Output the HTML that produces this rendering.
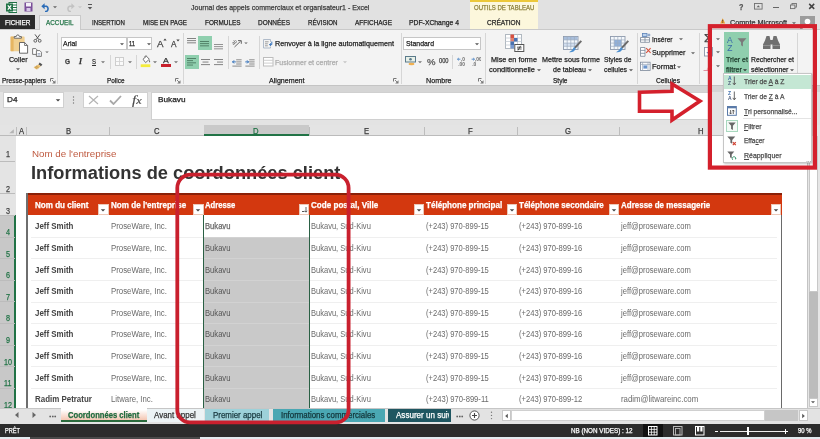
<!DOCTYPE html>
<html lang="fr"><head><meta charset="utf-8"><title>Journal des appels commerciaux et organisateur1 - Excel</title>
<style>
html,body{margin:0;padding:0}
body{width:820px;height:439px;position:relative;overflow:hidden;background:#e1e1e1;font-family:"Liberation Sans",sans-serif}
#app{position:absolute;left:0;top:0;width:820px;height:439px;overflow:hidden;will-change:transform;filter:blur(0.35px)}
.b{position:absolute;box-sizing:border-box;display:block}
.t{position:absolute;white-space:pre;transform-origin:0 50%;display:block;line-height:14px;-webkit-text-stroke:0.25px currentColor}
</style></head><body><div id="app">
<svg class="b" style="left:5.5px;top:1.5px;" width="11" height="11" viewBox="0 0 11 11"><rect x="3" y="0.5" width="8" height="10" fill="#fff" stroke="#217346" stroke-width="1"/><path d="M7 3H11M7 5.5H11M7 8H11" stroke="#217346" stroke-width="1"/><rect x="0" y="1.5" width="7" height="8" fill="#217346"/><path d="M1.8 3.3L5.2 7.7M5.2 3.3L1.8 7.7" stroke="#fff" stroke-width="1.2"/></svg>
<svg class="b" style="left:24px;top:1.5px;" width="9" height="10" viewBox="0 0 9 10"><rect x="0.5" y="0.5" width="8" height="9" fill="#7a4f9a"/><rect x="2" y="1" width="5" height="3.5" fill="#f4f0f8"/><rect x="2.5" y="6" width="4" height="3" fill="#d8c8e8"/></svg>
<svg class="b" style="left:41px;top:1.5px;" width="10" height="10" viewBox="0 0 10 10"><path d="M2 4.2H5.5A3 3 0 0 1 5.5 9.5H4" fill="none" stroke="#2b6cb8" stroke-width="1.6"/><path d="M0.3 4.2L3.6 1.2V7.2Z" fill="#2b6cb8"/></svg>
<svg class="b" style="left:52px;top:5px;" width="6" height="4" viewBox="0 0 6 4"><path d="M1.00 1.36H5.00L3 3.28Z" fill="#666"/></svg>
<svg class="b" style="left:64.5px;top:1.5px;" width="10" height="10" viewBox="0 0 10 10"><path d="M8 4.2H4.5A3 3 0 0 0 4.5 9.5H6" fill="none" stroke="#c2c2c2" stroke-width="1.6"/><path d="M9.7 4.2L6.4 1.2V7.2Z" fill="#c2c2c2"/></svg>
<svg class="b" style="left:76.5px;top:5px;" width="6" height="4" viewBox="0 0 6 4"><path d="M1.00 1.36H5.00L3 3.28Z" fill="#c8c8c8"/></svg>
<svg class="b" style="left:87px;top:3px;" width="6" height="8" viewBox="0 0 6 8"><path d="M1 1.5H5" stroke="#555" stroke-width="1"/><path d="M0.8 4H5.2L3 6.6Z" fill="#555"/></svg>
<span class="t" style="left:191px;top:1px;font-size:7.6px;color:#3b3b3b;transform:scaleX(0.9226);">Journal des appels commerciaux et organisateur1 - Excel</span>
<div class="b" style="left:469.5px;top:0px;width:68.5px;height:29.5px;background:#fcf7dc;"></div>
<div class="b" style="left:469.5px;top:0px;width:68.5px;height:1.6px;background:#ecc83a;"></div>
<span class="t" style="left:473.5px;top:1px;font-size:7.2px;color:#8c803a;transform:scaleX(0.8384);">OUTILS DE TABLEAU</span>
<span class="t" style="left:486.5px;top:16px;font-size:7.4px;color:#222;transform:scaleX(0.8889);">CRÉATION</span>
<span class="t" style="left:739px;top:0px;font-size:8.5px;color:#555;font-weight:bold;transform:scaleX(0.8474);">?</span>
<svg class="b" style="left:754.3px;top:3.4px;" width="9" height="7" viewBox="0 0 9 7"><rect x="0.5" y="0.5" width="7.6" height="5.6" fill="none" stroke="#707070" stroke-width="0.9"/><path d="M2.6 4.2H6L4.3 2.2Z" fill="#666"/></svg>
<div class="b" style="left:772.8px;top:6.6px;width:6.2px;height:1.4px;background:#666;"></div>
<svg class="b" style="left:790.3px;top:3.2px;" width="8" height="7" viewBox="0 0 8 7"><rect x="2" y="0.5" width="4.4" height="3.6" fill="none" stroke="#707070" stroke-width="0.9"/><rect x="0.5" y="2" width="4.4" height="3.6" fill="#e1e1e1" stroke="#707070" stroke-width="0.9"/></svg>
<svg class="b" style="left:807.5px;top:3.2px;" width="8" height="7" viewBox="0 0 8 7"><path d="M1.2 0.9L6.2 5.9M6.2 0.9L1.2 5.9" stroke="#444" stroke-width="1.5"/></svg>
<svg class="b" style="left:720px;top:18px;" width="6" height="6" viewBox="0 0 6 6"><path d="M2.7 0.2L5.2 5.4H0.2Z" fill="#f0a030"/><path d="M2.7 1.8V3.6M2.7 4.1V4.8" stroke="#333" stroke-width="0.8"/></svg>
<span class="t" style="left:730px;top:16px;font-size:7.5px;color:#333;transform:scaleX(0.9699);">Compte Microsoft</span>
<svg class="b" style="left:791px;top:20.5px;" width="6" height="4" viewBox="0 0 6 4"><path d="M1.00 1.36H5.00L3 3.28Z" fill="#666"/></svg>
<div class="b" style="left:800px;top:16px;width:15px;height:13.5px;background:#9c9c9c;"></div>
<svg class="b" style="left:800px;top:16px;" width="15" height="14" viewBox="0 0 15 14"><circle cx="7.5" cy="5.5" r="2.8" fill="#fff"/><path d="M2.5 14C2.5 10 5 9 7.5 9S12.5 10 12.5 14Z" fill="#fff"/></svg>
<div class="b" style="left:0px;top:15.2px;width:35px;height:14.3px;background:#2b2b2b;"></div>
<span class="t" style="left:5px;top:16px;font-size:7.4px;color:#fff;transform:scaleX(0.8615);">FICHIER</span>
<div class="b" style="left:0px;top:29px;width:820px;height:56.5px;background:#f3f3f3;border-top:1px solid #c9c9c9;border-bottom:1px solid #c4c4c4;"></div>
<div class="b" style="left:38.8px;top:15.2px;width:42.7px;height:14.8px;background:#f3f3f3;border:1px solid #c9c9c9;border-bottom:none;"></div>
<span class="t" style="left:46px;top:16px;font-size:7.4px;color:#217346;transform:scaleX(0.8574);">ACCUEIL</span>
<span class="t" style="left:92px;top:16px;font-size:7.4px;color:#222;transform:scaleX(0.8218);">INSERTION</span>
<span class="t" style="left:143px;top:16px;font-size:7.4px;color:#222;transform:scaleX(0.8381);">MISE EN PAGE</span>
<span class="t" style="left:205px;top:16px;font-size:7.4px;color:#222;transform:scaleX(0.8634);">FORMULES</span>
<span class="t" style="left:258px;top:16px;font-size:7.4px;color:#222;transform:scaleX(0.8744);">DONNÉES</span>
<span class="t" style="left:307.5px;top:16px;font-size:7.4px;color:#222;transform:scaleX(0.8342);">RÉVISION</span>
<span class="t" style="left:354.5px;top:16px;font-size:7.4px;color:#222;transform:scaleX(0.8737);">AFFICHAGE</span>
<span class="t" style="left:409px;top:16px;font-size:7.4px;color:#222;transform:scaleX(0.9209);">PDF-XChange 4</span>
<svg class="b" style="left:10px;top:33.5px;" width="19" height="20" viewBox="0 0 19 20"><rect x="0.6" y="2.6" width="14" height="14.6" rx="0.8" fill="#f0cf90"/><rect x="0.6" y="2.6" width="3" height="14.6" fill="#e6b562"/><path d="M4.2 4.2V2.6H6.2Q6.4 0.9 7.8 0.9T9.4 2.6H11.4V4.2Z" fill="#fff" stroke="#5a5a5a" stroke-width="0.9"/><path d="M9.5 8.5H14.6L17.6 11.5V19.2H9.5Z" fill="#fff" stroke="#5a5a5a" stroke-width="0.9"/><path d="M14.6 8.5V11.5H17.6" fill="none" stroke="#5a5a5a" stroke-width="0.8"/></svg>
<span class="t" style="left:9px;top:53px;font-size:7.8px;color:#1e1e1e;transform:scaleX(0.9082);">Coller</span>
<svg class="b" style="left:14.5px;top:66.5px;" width="6" height="4" viewBox="0 0 6 4"><path d="M1.00 1.36H5.00L3 3.28Z" fill="#666"/></svg>
<svg class="b" style="left:33px;top:34px;" width="9" height="9" viewBox="0 0 9 9"><path d="M2 0.4L5.8 5.6M7 0.4L3.2 5.6" stroke="#555" stroke-width="1" fill="none"/><circle cx="2.3" cy="6.8" r="1.4" fill="none" stroke="#555" stroke-width="0.9"/><circle cx="6.7" cy="6.8" r="1.4" fill="none" stroke="#555" stroke-width="0.9"/></svg>
<svg class="b" style="left:32px;top:47.5px;" width="11" height="9" viewBox="0 0 11 9"><path d="M0.6 0.6H3.8L5.2 2V6.4H0.6Z" fill="#fff" stroke="#666" stroke-width="0.85"/><path d="M4.4 2.6H7.8L9.4 4.2V8.4H4.4Z" fill="#fff" stroke="#666" stroke-width="0.85"/><path d="M5.6 5.6H8.2M5.6 7H8.2" stroke="#7a8aa8" stroke-width="0.7"/></svg>
<svg class="b" style="left:44px;top:49.8px;" width="6" height="4" viewBox="0 0 6 4"><path d="M1.25 1.44H4.75L3 3.12Z" fill="#666"/></svg>
<svg class="b" style="left:32.5px;top:62px;" width="10" height="8" viewBox="0 0 10 8"><path d="M6.6 0.6L9.4 2.4L8 4.2L5.4 2.4Z" fill="#555"/><path d="M5.2 2.4L7.8 4.4L3.4 7.6L0.6 5.4Z" fill="#ecc070"/><path d="M1.8 4.6L4.4 6.8M3 3.8L5.6 6" stroke="#a88440" stroke-width="0.7"/></svg>
<span class="t" style="left:2px;top:74px;font-size:7.5px;color:#1e1e1e;transform:scaleX(0.8723);">Presse-papiers</span>
<svg class="b" style="left:49.5px;top:78px;" width="6" height="6" viewBox="0 0 6 6"><path d="M0.5 3.5V0.5H3.5" fill="none" stroke="#777" stroke-width="1"/><path d="M5.5 2.2V5.5H2.2Z" fill="#777"/><path d="M2 2L4.5 4.5" stroke="#777" stroke-width="0.9"/></svg>
<div class="b" style="left:57.3px;top:33px;width:1px;height:50.5px;background:#d6d6d6;"></div>
<div class="b" style="left:60.8px;top:36.5px;width:65.8px;height:13.9px;background:#fff;border:1px solid #c6c6c6;"></div>
<span class="t" style="left:62.9px;top:37px;font-size:7.5px;color:#1e1e1e;transform:scaleX(0.9265);">Arial</span>
<svg class="b" style="left:118.5px;top:41.8px;" width="6" height="4" viewBox="0 0 6 4"><path d="M1.00 1.36H5.00L3 3.28Z" fill="#555"/></svg>
<div class="b" style="left:127.1px;top:36.5px;width:25.3px;height:13.9px;background:#fff;border:1px solid #c6c6c6;"></div>
<span class="t" style="left:129.4px;top:37px;font-size:7.5px;color:#1e1e1e;transform:scaleX(0.7705);">11</span>
<svg class="b" style="left:145.5px;top:41.8px;" width="6" height="4" viewBox="0 0 6 4"><path d="M1.00 1.36H5.00L3 3.28Z" fill="#555"/></svg>
<span class="t" style="left:156.5px;top:37px;font-size:9.5px;color:#444;transform:scaleX(1.0259);">A</span>
<svg class="b" style="left:162.5px;top:38px;" width="4" height="3" viewBox="0 0 4 3"><path d="M0.3 2.6L2 0.4L3.7 2.6Z" fill="#444"/></svg>
<span class="t" style="left:171px;top:37px;font-size:8.3px;color:#444;transform:scaleX(0.9935);">A</span>
<svg class="b" style="left:176.2px;top:38.5px;" width="4" height="3" viewBox="0 0 4 3"><path d="M0.3 0.4L2 2.6L3.7 0.4Z" fill="#444"/></svg>
<span class="t" style="left:64.5px;top:55px;font-size:7.6px;color:#333;font-weight:bold;transform:scaleX(0.8459);">G</span>
<span class="t" style="left:78.6px;top:55px;font-size:7.8px;color:#333;font-weight:bold;font-style:italic;font-family:'Liberation Serif',serif;transform:scaleX(0.9882);">I</span>
<span class="t" style="left:91.8px;top:55px;font-size:7.6px;color:#333;transform:scaleX(0.7891);text-decoration:underline;">S</span>
<svg class="b" style="left:99.5px;top:60px;" width="6" height="4" viewBox="0 0 6 4"><path d="M1.00 1.36H5.00L3 3.28Z" fill="#777"/></svg>
<div class="b" style="left:109.5px;top:55px;width:1px;height:14px;background:#d6d6d6;"></div>
<svg class="b" style="left:115px;top:57px;" width="9" height="9" viewBox="0 0 9 9"><rect x="0.5" y="0.5" width="8" height="8" fill="#fafafa" stroke="#c8c8c8" stroke-width="0.9"/><path d="M4.5 0.5V8.5M0.5 4.5H8.5" stroke="#d4d4d4" stroke-width="0.9"/></svg>
<svg class="b" style="left:127px;top:60px;" width="6" height="4" viewBox="0 0 6 4"><path d="M1.00 1.36H5.00L3 3.28Z" fill="#777"/></svg>
<div class="b" style="left:135.5px;top:55px;width:1px;height:14px;background:#d6d6d6;"></div>
<svg class="b" style="left:140px;top:55px;" width="12" height="13" viewBox="0 0 12 13"><rect x="0.7" y="9.3" width="9.6" height="2.8" fill="#f4ec3c"/><path d="M3 4.2L6.5 1.2L9.3 4.3L5.6 7.6Z" fill="#fff" stroke="#666" stroke-width="0.9"/><path d="M9.3 4.6Q10.8 6.6 9.8 7.6Q8.6 7.2 9.3 4.6Z" fill="#666"/><path d="M4.5 2.3Q5 0.2 6.6 1" fill="none" stroke="#666" stroke-width="0.8"/></svg>
<svg class="b" style="left:152px;top:60px;" width="6" height="4" viewBox="0 0 6 4"><path d="M1.00 1.36H5.00L3 3.28Z" fill="#777"/></svg>
<span class="t" style="left:163px;top:54px;font-size:8px;color:#333;transform:scaleX(1.0870);">A</span>
<div class="b" style="left:161px;top:64.2px;width:9.6px;height:2.7px;background:#c8202c;"></div>
<svg class="b" style="left:172.5px;top:60px;" width="6" height="4" viewBox="0 0 6 4"><path d="M1.00 1.36H5.00L3 3.28Z" fill="#777"/></svg>
<span class="t" style="left:106.5px;top:74px;font-size:7.5px;color:#1e1e1e;transform:scaleX(0.8567);">Police</span>
<svg class="b" style="left:174.5px;top:78px;" width="6" height="6" viewBox="0 0 6 6"><path d="M0.5 3.5V0.5H3.5" fill="none" stroke="#777" stroke-width="1"/><path d="M5.5 2.2V5.5H2.2Z" fill="#777"/><path d="M2 2L4.5 4.5" stroke="#777" stroke-width="0.9"/></svg>
<div class="b" style="left:183px;top:33px;width:1px;height:50.5px;background:#d6d6d6;"></div>
<svg class="b" style="left:187px;top:38px;" width="9" height="6.6000000000000005" viewBox="0 0 9 6.6000000000000005"><rect x="0" y="0.0" width="9" height="0.9" fill="#777"/><rect x="0" y="2.2" width="9" height="0.9" fill="#777"/><rect x="0" y="4.4" width="9" height="0.9" fill="#777"/></svg>
<div class="b" style="left:198px;top:36px;width:13.5px;height:14px;background:#8fcfae;"></div>
<svg class="b" style="left:200px;top:40.5px;" width="9" height="6.6000000000000005" viewBox="0 0 9 6.6000000000000005"><rect x="0" y="0.0" width="9" height="0.9" fill="#4a7a60"/><rect x="0" y="2.2" width="9" height="0.9" fill="#4a7a60"/><rect x="0" y="4.4" width="9" height="0.9" fill="#4a7a60"/></svg>
<svg class="b" style="left:213.5px;top:44px;" width="9" height="6.6000000000000005" viewBox="0 0 9 6.6000000000000005"><rect x="0" y="0.0" width="9" height="0.9" fill="#888"/><rect x="0" y="2.2" width="9" height="0.9" fill="#888"/><rect x="0" y="4.4" width="9" height="0.9" fill="#888"/></svg>
<div class="b" style="left:185px;top:55px;width:13.5px;height:14px;background:#8fcfae;"></div>
<svg class="b" style="left:187px;top:58.2px;" width="9" height="8.8" viewBox="0 0 9 8.8"><rect x="0" y="0.0" width="9" height="0.9" fill="#4a7a60"/><rect x="0" y="2.2" width="6" height="0.9" fill="#4a7a60"/><rect x="0" y="4.4" width="9" height="0.9" fill="#4a7a60"/><rect x="0" y="6.6" width="6" height="0.9" fill="#4a7a60"/></svg>
<svg class="b" style="left:200.5px;top:58.5px;" width="9" height="7.800000000000001" viewBox="0 0 9 7.800000000000001"><rect x="0.0" y="0.0" width="9" height="0.9" fill="#777"/><rect x="1.5" y="2.6" width="6" height="0.9" fill="#777"/><rect x="0.0" y="5.2" width="9" height="0.9" fill="#777"/></svg>
<svg class="b" style="left:213.5px;top:58.5px;" width="9" height="7.800000000000001" viewBox="0 0 9 7.800000000000001"><rect x="0" y="0.0" width="9" height="0.9" fill="#777"/><rect x="3" y="2.6" width="6" height="0.9" fill="#777"/><rect x="0" y="5.2" width="9" height="0.9" fill="#777"/></svg>
<div class="b" style="left:227.5px;top:36px;width:1px;height:33px;background:#d6d6d6;"></div>
<svg class="b" style="left:231.5px;top:38.5px;" width="11" height="9" viewBox="0 0 11 9"><path d="M2.5 8L8.6 2.2" stroke="#666" stroke-width="1"/><path d="M6 1.6H9.3V4.8" fill="none" stroke="#666" stroke-width="1"/><text x="0" y="5" font-size="5" font-family="Liberation Sans, sans-serif" fill="#555" transform="rotate(-38 2.5 4)">ab</text></svg>
<svg class="b" style="left:242.5px;top:41.2px;" width="6" height="4" viewBox="0 0 6 4"><path d="M1.25 1.44H4.75L3 3.12Z" fill="#666"/></svg>
<svg class="b" style="left:232px;top:58.5px;" width="10" height="8" viewBox="0 0 10 8"><path d="M4.2 0.8H9.6M4.2 2.9H9.6M4.2 5H9.6M0.4 7.1H9.6" stroke="#777" stroke-width="0.85"/><path d="M3.8 2.9H0.6M2 1.4L0.5 2.9L2 4.4" stroke="#2b6cb8" stroke-width="1" fill="none"/></svg>
<svg class="b" style="left:245px;top:58.5px;" width="10" height="8" viewBox="0 0 10 8"><path d="M4.2 0.8H9.6M4.2 2.9H9.6M4.2 5H9.6M0.4 7.1H9.6" stroke="#777" stroke-width="0.85"/><path d="M0.3 2.9H3.5M2.1 1.4L3.6 2.9L2.1 4.4" stroke="#2b6cb8" stroke-width="1" fill="none"/></svg>
<div class="b" style="left:259px;top:36px;width:1px;height:33px;background:#d6d6d6;"></div>
<svg class="b" style="left:263px;top:38.5px;" width="11" height="10" viewBox="0 0 11 10"><path d="M0.5 0.5H7.5V3M0.5 0.5V9H7.5V7.6" fill="none" stroke="#a8b4c4" stroke-width="0.9"/><path d="M2 2.8H5.6M2 4.8H4.8M2 6.8H4.8" stroke="#888" stroke-width="0.8"/><path d="M8.8 2.6V5.6H6.6M7.9 4.3L6.5 5.6L7.9 6.9" stroke="#2b6cb8" stroke-width="0.95" fill="none"/></svg>
<span class="t" style="left:274.6px;top:37px;font-size:7.5px;color:#1e1e1e;transform:scaleX(0.9569);">Renvoyer à la ligne automatiquement</span>
<svg class="b" style="left:263px;top:57px;" width="11" height="10" viewBox="0 0 11 10"><rect x="0.5" y="0.5" width="9.5" height="8.5" fill="#fff" stroke="#bdbdbd" stroke-width="1"/><path d="M0.5 3.3H10M0.5 6.1H10" stroke="#c8c8c8" stroke-width="0.9"/></svg>
<span class="t" style="left:274.6px;top:56px;font-size:7.5px;color:#ababab;transform:scaleX(0.9371);">Fusionner et centrer</span>
<svg class="b" style="left:341.5px;top:60px;" width="6" height="4" viewBox="0 0 6 4"><path d="M1.00 1.36H5.00L3 3.28Z" fill="#c4c4c4"/></svg>
<span class="t" style="left:269px;top:74px;font-size:7.5px;color:#1e1e1e;transform:scaleX(0.9460);">Alignement</span>
<svg class="b" style="left:393px;top:78px;" width="6" height="6" viewBox="0 0 6 6"><path d="M0.5 3.5V0.5H3.5" fill="none" stroke="#777" stroke-width="1"/><path d="M5.5 2.2V5.5H2.2Z" fill="#777"/><path d="M2 2L4.5 4.5" stroke="#777" stroke-width="0.9"/></svg>
<div class="b" style="left:400.5px;top:33px;width:1px;height:50.5px;background:#d6d6d6;"></div>
<div class="b" style="left:403.3px;top:36.5px;width:78.2px;height:13.9px;background:#fff;border:1px solid #c6c6c6;"></div>
<span class="t" style="left:405.5px;top:37px;font-size:7.5px;color:#1e1e1e;transform:scaleX(0.9197);">Standard</span>
<svg class="b" style="left:474px;top:41.8px;" width="6" height="4" viewBox="0 0 6 4"><path d="M1.00 1.36H5.00L3 3.28Z" fill="#555"/></svg>
<svg class="b" style="left:405px;top:56px;" width="11" height="10" viewBox="0 0 11 10"><rect x="0.5" y="0.5" width="10" height="5.5" fill="#e8f0e8" stroke="#5a7a8a" stroke-width="1"/><circle cx="5.5" cy="3.3" r="1.3" fill="#5a7a8a"/><ellipse cx="6.5" cy="8" rx="3" ry="1.2" fill="#f0b050"/></svg>
<svg class="b" style="left:417px;top:60px;" width="6" height="4" viewBox="0 0 6 4"><path d="M1.00 1.36H5.00L3 3.28Z" fill="#777"/></svg>
<span class="t" style="left:427px;top:55px;font-size:9px;color:#555;transform:scaleX(1.0621);">%</span>
<span class="t" style="left:439px;top:54px;font-size:6.5px;color:#444;transform:scaleX(0.8758);">000</span>
<div class="b" style="left:452px;top:55px;width:1px;height:14px;background:#d6d6d6;"></div>
<svg class="b" style="left:457px;top:57px;" width="10" height="9" viewBox="0 0 10 9"><path d="M0.6 2.2H3.4M1.8 1L0.5 2.2L1.8 3.4" stroke="#3a78c0" stroke-width="0.8" fill="none"/><text x="4" y="4" font-size="4.8" font-weight="bold" font-family="Liberation Sans, sans-serif" fill="#666">,0</text><text x="1.2" y="8.6" font-size="4.8" font-weight="bold" font-family="Liberation Sans, sans-serif" fill="#666">,00</text></svg>
<svg class="b" style="left:471px;top:57px;" width="10" height="9" viewBox="0 0 10 9"><path d="M0.6 2.2H3.4M2.2 1L3.5 2.2L2.2 3.4" stroke="#3a78c0" stroke-width="0.8" fill="none"/><text x="4" y="4" font-size="4.8" font-weight="bold" font-family="Liberation Sans, sans-serif" fill="#666">,00</text><text x="1.2" y="8.6" font-size="4.8" font-weight="bold" font-family="Liberation Sans, sans-serif" fill="#666">,0</text></svg>
<span class="t" style="left:425.5px;top:74px;font-size:7.5px;color:#1e1e1e;transform:scaleX(0.9560);">Nombre</span>
<svg class="b" style="left:477.5px;top:78px;" width="6" height="6" viewBox="0 0 6 6"><path d="M0.5 3.5V0.5H3.5" fill="none" stroke="#777" stroke-width="1"/><path d="M5.5 2.2V5.5H2.2Z" fill="#777"/><path d="M2 2L4.5 4.5" stroke="#777" stroke-width="0.9"/></svg>
<div class="b" style="left:484.5px;top:33px;width:1px;height:50.5px;background:#d6d6d6;"></div>
<svg class="b" style="left:505px;top:34px;" width="20" height="19" viewBox="0 0 20 19"><rect x="0.5" y="0.5" width="16" height="14" fill="#fff" stroke="#b0b8c0" stroke-width="1"/><path d="M0.5 4H16.5M0.5 7.5H16.5M0.5 11H16.5M5.5 0.5V14.5M9 0.5V14.5M12.5 0.5V14.5" stroke="#c4ccd4" stroke-width="0.8"/><rect x="5.5" y="0.5" width="3.5" height="3.5" fill="#d85040"/><rect x="5.5" y="4" width="3.5" height="3.5" fill="#e08070"/><rect x="9" y="4" width="3.5" height="3.5" fill="#4a72b0"/><rect x="5.5" y="7.5" width="3.5" height="3.5" fill="#4a72b0"/><rect x="5.5" y="11" width="3.5" height="3.5" fill="#7a9ad0"/><rect x="9.8" y="10.5" width="9" height="7" fill="#fff" stroke="#555" stroke-width="1"/><path d="M12 13.2H16.6M12 15H16.6M15.6 11.8L13 16.4" stroke="#333" stroke-width="0.8"/></svg>
<span class="t" style="left:491px;top:53px;font-size:7.7px;color:#1e1e1e;transform:scaleX(0.9429);">Mise en forme</span>
<span class="t" style="left:489px;top:63px;font-size:7.7px;color:#1e1e1e;transform:scaleX(0.9767);">conditionnelle</span>
<svg class="b" style="left:536px;top:68px;" width="6" height="4" viewBox="0 0 6 4"><path d="M1.00 1.36H5.00L3 3.28Z" fill="#555"/></svg>
<svg class="b" style="left:563px;top:35.6px;" width="20" height="18" viewBox="0 0 20 18"><rect x="0.5" y="0.5" width="14.5" height="13" fill="#f4f8fc" stroke="#8e9aac" stroke-width="0.9"/><rect x="0.9" y="0.9" width="13.7" height="3" fill="#a8bedc"/><rect x="0.9" y="7" width="13.7" height="3.2" fill="#d4e0f0"/><path d="M0.5 3.9H15M0.5 7.1H15M0.5 10.3H15M4.2 0.5V13.5M7.8 0.5V13.5M11.4 0.5V13.5" stroke="#9eacbf" stroke-width="0.7"/><path d="M17.6 4.2L19 5.6L12.6 12.6L11 11.2Z" fill="#6a6a6a"/><path d="M11 11L12.8 12.8Q10.6 17 6 16.2Q9.6 14.8 11 11Z" fill="#4a8ed0"/></svg>
<span class="t" style="left:542px;top:53px;font-size:7.7px;color:#1e1e1e;transform:scaleX(0.9348);">Mettre sous forme</span>
<span class="t" style="left:553px;top:63px;font-size:7.7px;color:#1e1e1e;transform:scaleX(0.9175);">de tableau</span>
<svg class="b" style="left:587px;top:68px;" width="6" height="4" viewBox="0 0 6 4"><path d="M1.00 1.36H5.00L3 3.28Z" fill="#555"/></svg>
<svg class="b" style="left:610px;top:35.6px;" width="20" height="18" viewBox="0 0 20 18"><rect x="0.5" y="0.5" width="14.5" height="13" fill="#f4f8fc" stroke="#8e9aac" stroke-width="0.9"/><rect x="4.2" y="3.9" width="7.2" height="6.4" fill="#8fb0dc"/><path d="M0.5 3.9H15M0.5 7.1H15M0.5 10.3H15M4.2 0.5V13.5M7.8 0.5V13.5M11.4 0.5V13.5" stroke="#9eacbf" stroke-width="0.7"/><path d="M17.6 4.2L19 5.6L12.6 12.6L11 11.2Z" fill="#6a6a6a"/><path d="M11 11L12.8 12.8Q10.6 17 6 16.2Q9.6 14.8 11 11Z" fill="#4a8ed0"/></svg>
<span class="t" style="left:604px;top:53px;font-size:7.7px;color:#1e1e1e;transform:scaleX(0.8682);">Styles de</span>
<span class="t" style="left:604px;top:63px;font-size:7.7px;color:#1e1e1e;transform:scaleX(0.8956);">cellules</span>
<svg class="b" style="left:628px;top:68px;" width="6" height="4" viewBox="0 0 6 4"><path d="M1.00 1.36H5.00L3 3.28Z" fill="#555"/></svg>
<span class="t" style="left:553px;top:74px;font-size:7.5px;color:#1e1e1e;transform:scaleX(0.8696);">Style</span>
<div class="b" style="left:636.5px;top:33px;width:1px;height:50.5px;background:#d6d6d6;"></div>
<svg class="b" style="left:640px;top:33.3px;" width="11" height="10" viewBox="0 0 11 10"><path d="M0.5 4.5H9.5V9.3H0.5ZM5 4.5V9.3M0.5 6.9H9.5" fill="#fff" stroke="#7a8698" stroke-width="0.8"/><rect x="2.4" y="0.5" width="4.6" height="3" fill="#b8d0ec" stroke="#5a82b8" stroke-width="0.8"/><path d="M7.6 2H10.4M9 0.6V3.4" stroke="#5a82b8" stroke-width="0.8"/></svg>
<span class="t" style="left:652px;top:33px;font-size:7.8px;color:#1e1e1e;transform:scaleX(0.8445);">Insérer</span>
<svg class="b" style="left:677.8px;top:36.6px;" width="6" height="4" viewBox="0 0 6 4"><path d="M1.00 1.36H5.00L3 3.28Z" fill="#666"/></svg>
<svg class="b" style="left:640px;top:47px;" width="12" height="10" viewBox="0 0 12 10"><path d="M0.5 0.5H5V9.3H0.5ZM0.5 3.4H5M0.5 6.3H5" fill="#fff" stroke="#7a8698" stroke-width="0.8"/><path d="M6.2 1.2L10.6 5.8M10.6 1.2L6.2 5.8" stroke="#d8503c" stroke-width="1.1"/></svg>
<span class="t" style="left:652px;top:46px;font-size:7.8px;color:#1e1e1e;transform:scaleX(0.9312);">Supprimer</span>
<svg class="b" style="left:689.5px;top:50.8px;" width="6" height="4" viewBox="0 0 6 4"><path d="M1.00 1.36H5.00L3 3.28Z" fill="#666"/></svg>
<svg class="b" style="left:640px;top:60.6px;" width="11" height="10" viewBox="0 0 11 10"><rect x="0.5" y="1.2" width="9.6" height="8.2" fill="#fff" stroke="#7a8698" stroke-width="0.8"/><path d="M0.5 3.4H10.1M2.6 1.2V9.4M8 1.2V9.4" stroke="#9aa6b8" stroke-width="0.7"/><rect x="3.4" y="4.4" width="3.8" height="3.2" fill="#6a94cc"/></svg>
<span class="t" style="left:652px;top:60px;font-size:7.8px;color:#1e1e1e;transform:scaleX(0.9514);">Format</span>
<svg class="b" style="left:675.6px;top:64.6px;" width="6" height="4" viewBox="0 0 6 4"><path d="M1.00 1.36H5.00L3 3.28Z" fill="#666"/></svg>
<span class="t" style="left:656px;top:74px;font-size:7.5px;color:#1e1e1e;transform:scaleX(0.8996);">Cellules</span>
<div class="b" style="left:699px;top:33px;width:1px;height:50.5px;background:#d6d6d6;"></div>
<span class="t" style="left:703.5px;top:32px;font-size:10px;color:#444;transform:scaleX(1.2133);">Σ</span>
<svg class="b" style="left:715px;top:36.6px;" width="6" height="4" viewBox="0 0 6 4"><path d="M1.00 1.36H5.00L3 3.28Z" fill="#666"/></svg>
<svg class="b" style="left:704px;top:47.3px;" width="9" height="10" viewBox="0 0 9 10"><rect x="0.5" y="0.5" width="8" height="8.5" fill="#fff" stroke="#8a96a8" stroke-width="0.9"/><path d="M4.5 2.5V6.5M2.8 5L4.5 6.8L6.2 5" stroke="#4a72b0" stroke-width="1" fill="none"/></svg>
<svg class="b" style="left:715px;top:50.3px;" width="6" height="4" viewBox="0 0 6 4"><path d="M1.00 1.36H5.00L3 3.28Z" fill="#666"/></svg>
<svg class="b" style="left:703px;top:61.5px;" width="10" height="9" viewBox="0 0 10 9"><path d="M3.5 7.5L7.5 1.5L9.5 3L5.5 8.5Z" fill="#f0b0b8"/><path d="M0.5 8.5H5.5" stroke="#e090a0" stroke-width="1"/></svg>
<svg class="b" style="left:715px;top:64.3px;" width="6" height="4" viewBox="0 0 6 4"><path d="M1.00 1.36H5.00L3 3.28Z" fill="#666"/></svg>
<div class="b" style="left:723.5px;top:32px;width:25.5px;height:41.5px;background:#8fcfae;"></div>
<svg class="b" style="left:727px;top:35px;" width="20" height="17" viewBox="0 0 20 17"><text x="0" y="7.5" font-size="8.5" font-family="Liberation Sans, sans-serif" fill="#3a6aa8">A</text><text x="0.3" y="16" font-size="8.5" font-family="Liberation Sans, sans-serif" fill="#3a6aa8">Z</text><path d="M10.5 3.2H19.5L15.9 7.2V11.4L14.1 10.2V7.2Z" fill="#7a7a7a"/></svg>
<span class="t" style="left:725.5px;top:53px;font-size:7.7px;color:#1c3a2a;transform:scaleX(0.9129);">Trier et</span>
<span class="t" style="left:725.5px;top:63px;font-size:7.7px;color:#1c3a2a;transform:scaleX(0.9351);">filtrer</span>
<svg class="b" style="left:741.5px;top:68px;" width="6" height="4" viewBox="0 0 6 4"><path d="M1.00 1.36H5.00L3 3.28Z" fill="#333"/></svg>
<svg class="b" style="left:762px;top:35px;" width="19" height="16" viewBox="0 0 19 16"><path d="M3 5.5L4.5 1H7.5L8.5 5.5V14H1V9.5Z" fill="#707070"/><path d="M16 5.5L14.5 1H11.5L10.5 5.5V14H18V9.5Z" fill="#707070"/><rect x="8" y="5" width="3" height="4.5" fill="#707070"/><path d="M1 10.5H8.5M10.5 10.5H18" stroke="#999" stroke-width="0.8"/></svg>
<span class="t" style="left:750.5px;top:53px;font-size:7.7px;color:#1e1e1e;transform:scaleX(0.8891);">Rechercher et</span>
<span class="t" style="left:750.5px;top:63px;font-size:7.7px;color:#1e1e1e;transform:scaleX(0.9031);">sélectionner</span>
<svg class="b" style="left:789px;top:68px;" width="6" height="4" viewBox="0 0 6 4"><path d="M1.00 1.36H5.00L3 3.28Z" fill="#555"/></svg>
<div class="b" style="left:797.3px;top:33px;width:1px;height:40px;background:#d6d6d6;"></div>
<div class="b" style="left:0px;top:85.5px;width:820px;height:7px;background:#d5d5d5;"></div>
<div class="b" style="left:0px;top:92px;width:820px;height:33px;background:#e3e3e3;"></div>
<div class="b" style="left:3px;top:92px;width:60.5px;height:15.5px;background:#fff;border:1px solid #d0d0d0;"></div>
<span class="t" style="left:7px;top:93px;font-size:7.8px;color:#1e1e1e;transform:scaleX(1.0531);">D4</span>
<svg class="b" style="left:54.5px;top:97.5px;" width="6" height="4" viewBox="0 0 6 4"><path d="M0.75 1.28H5.25L3 3.44Z" fill="#444"/></svg>
<svg class="b" style="left:72px;top:96px;" width="3" height="8" viewBox="0 0 3 8"><circle cx="1.5" cy="1" r="0.7" fill="#777"/><circle cx="1.5" cy="4" r="0.7" fill="#777"/><circle cx="1.5" cy="7" r="0.7" fill="#777"/></svg>
<div class="b" style="left:83px;top:92px;width:64.5px;height:15.5px;background:#fff;border:1px solid #d0d0d0;"></div>
<svg class="b" style="left:88px;top:95px;" width="11" height="10" viewBox="0 0 11 10"><path d="M1 1L10 9M10 1L1 9" stroke="#b4b4b4" stroke-width="1.2"/></svg>
<svg class="b" style="left:109px;top:95px;" width="13" height="10" viewBox="0 0 13 10"><path d="M1 5.5L4.5 9L12 1" stroke="#a8a8a8" stroke-width="1.8" fill="none"/></svg>
<span class="t" style="left:131.5px;top:93px;font-size:13px;color:#4a4a4a;font-style:italic;font-family:'Liberation Serif',serif;transform:scaleX(1.1724);-webkit-text-stroke:0.15px #4a4a4a;">f<span style="font-size:10.5px">x</span></span>
<div class="b" style="left:151px;top:92px;width:560px;height:27.5px;background:#fff;border:1px solid #d0d0d0;"></div>
<span class="t" style="left:157.5px;top:93px;font-size:7.8px;color:#1e1e1e;transform:scaleX(1.0571);">Bukavu</span>
<div class="b" style="left:0px;top:125px;width:820px;height:11px;background:#e4e4e4;"></div>
<div class="b" style="left:0px;top:135.2px;width:808px;height:1px;background:#bbbbbb;"></div>
<svg class="b" style="left:8.5px;top:129.3px;" width="5" height="5" viewBox="0 0 5 5"><path d="M4.8 0.3V4.3H0.3Z" fill="#b4b4b4"/></svg>
<div class="b" style="left:15.5px;top:126.5px;width:1px;height:9px;background:#bdbdbd;"></div>
<div class="b" style="left:26px;top:126.5px;width:1px;height:9px;background:#bdbdbd;"></div>
<div class="b" style="left:109px;top:126.5px;width:1px;height:9px;background:#bdbdbd;"></div>
<div class="b" style="left:203.5px;top:126.5px;width:1px;height:9px;background:#bdbdbd;"></div>
<div class="b" style="left:309px;top:126.5px;width:1px;height:9px;background:#bdbdbd;"></div>
<div class="b" style="left:424px;top:126.5px;width:1px;height:9px;background:#bdbdbd;"></div>
<div class="b" style="left:517px;top:126.5px;width:1px;height:9px;background:#bdbdbd;"></div>
<div class="b" style="left:619px;top:126.5px;width:1px;height:9px;background:#bdbdbd;"></div>
<div class="b" style="left:203.5px;top:125px;width:105.5px;height:11px;background:#c9c9c9;"></div>
<div class="b" style="left:203.5px;top:134px;width:105.5px;height:2px;background:#217346;"></div>
<span class="t" style="left:19.0490625px;top:124px;font-size:8.5px;color:#3a3a3a;transform:scaleX(0.9000);">A</span>
<span class="t" style="left:65.7490625px;top:124px;font-size:8.5px;color:#3a3a3a;transform:scaleX(0.9000);">B</span>
<span class="t" style="left:154.037421875px;top:124px;font-size:8.5px;color:#3a3a3a;transform:scaleX(0.9000);">C</span>
<span class="t" style="left:253.237421875px;top:124px;font-size:8.5px;color:#217346;transform:scaleX(0.9000);">D</span>
<span class="t" style="left:363.74906250000004px;top:124px;font-size:8.5px;color:#3a3a3a;transform:scaleX(0.9000);">E</span>
<span class="t" style="left:467.963515625px;top:124px;font-size:8.5px;color:#3a3a3a;transform:scaleX(0.9000);">F</span>
<span class="t" style="left:565.2250781250001px;top:124px;font-size:8.5px;color:#3a3a3a;transform:scaleX(0.9000);">G</span>
<span class="t" style="left:697.937421875px;top:124px;font-size:8.5px;color:#3a3a3a;transform:scaleX(0.9000);">H</span>
<div class="b" style="left:0px;top:136px;width:15.5px;height:272px;background:#e4e4e4;"></div>
<div class="b" style="left:0px;top:215.2px;width:15.5px;height:193px;background:#c8c8c8;"></div>
<div class="b" style="left:14.3px;top:215.2px;width:1.4px;height:193px;background:#217346;"></div>
<div class="b" style="left:15.5px;top:136px;width:0.8px;height:79px;background:#c8c8c8;"></div>
<div class="b" style="left:0px;top:160.5px;width:15px;height:0.9px;background:#bcbcbc;"></div>
<div class="b" style="left:0px;top:192.8px;width:15px;height:0.9px;background:#bcbcbc;"></div>
<div class="b" style="left:0px;top:214.7px;width:15px;height:0.9px;background:#bcbcbc;"></div>
<div class="b" style="left:0px;top:236.62px;width:15px;height:0.9px;background:#bcbcbc;"></div>
<div class="b" style="left:0px;top:258.24px;width:15px;height:0.9px;background:#bcbcbc;"></div>
<div class="b" style="left:0px;top:279.86px;width:15px;height:0.9px;background:#bcbcbc;"></div>
<div class="b" style="left:0px;top:301.48px;width:15px;height:0.9px;background:#bcbcbc;"></div>
<div class="b" style="left:0px;top:323.1px;width:15px;height:0.9px;background:#bcbcbc;"></div>
<div class="b" style="left:0px;top:344.72px;width:15px;height:0.9px;background:#bcbcbc;"></div>
<div class="b" style="left:0px;top:366.34000000000003px;width:15px;height:0.9px;background:#bcbcbc;"></div>
<div class="b" style="left:0px;top:387.96000000000004px;width:15px;height:0.9px;background:#bcbcbc;"></div>
<span class="t" style="left:5.6912109375px;top:147px;font-size:8.5px;color:#444;transform:scaleX(0.8500);">1</span>
<span class="t" style="left:5.6912109375px;top:182px;font-size:8.5px;color:#444;transform:scaleX(0.8500);">2</span>
<span class="t" style="left:5.6912109375px;top:204px;font-size:8.5px;color:#444;transform:scaleX(0.8500);">3</span>
<span class="t" style="left:5.6912109375px;top:225px;font-size:8.5px;color:#217346;transform:scaleX(0.8500);">4</span>
<span class="t" style="left:5.6912109375px;top:247px;font-size:8.5px;color:#217346;transform:scaleX(0.8500);">5</span>
<span class="t" style="left:5.6912109375px;top:268px;font-size:8.5px;color:#217346;transform:scaleX(0.8500);">6</span>
<span class="t" style="left:5.6912109375px;top:290px;font-size:8.5px;color:#217346;transform:scaleX(0.8500);">7</span>
<span class="t" style="left:5.6912109375px;top:311px;font-size:8.5px;color:#217346;transform:scaleX(0.8500);">8</span>
<span class="t" style="left:5.6912109375px;top:333px;font-size:8.5px;color:#217346;transform:scaleX(0.8500);">9</span>
<span class="t" style="left:3.682421875px;top:355px;font-size:8.5px;color:#217346;transform:scaleX(0.8500);">10</span>
<span class="t" style="left:3.950703125px;top:376px;font-size:8.5px;color:#217346;transform:scaleX(0.8500);">11</span>
<span class="t" style="left:3.682421875px;top:398px;font-size:8.5px;color:#217346;transform:scaleX(0.8500);">12</span>
<div class="b" style="left:16.3px;top:136px;width:791.5px;height:272px;background:#fff;"></div>
<span class="t" style="left:32px;top:147px;font-size:9.6px;color:#bf5a40;transform:scaleX(1.0189);-webkit-text-stroke:0;">Nom de l'entreprise</span>
<span class="t" style="left:30.6px;top:166px;font-size:18px;color:#333;font-weight:bold;transform:scaleX(1.0143);-webkit-text-stroke:0;">Informations de coordonnées client</span>
<div class="b" style="left:26px;top:193.3px;width:755.6px;height:22px;background:#d3380f;"></div>
<div class="b" style="left:26px;top:193.2px;width:755.6px;height:2.1px;background:#8a2008;"></div>
<span class="t" style="left:35px;top:198px;font-size:8.4px;color:#fff;font-weight:bold;transform:scaleX(0.9633);">Nom du client</span>
<div class="b" style="left:98.4px;top:204.3px;width:10.2px;height:11px;background:#fff;border:1px solid #ecc8b8;"></div>
<svg class="b" style="left:100.2px;top:207.5px;" width="6" height="4" viewBox="0 0 6 4"><path d="M0.75 1.28H5.25L3 3.44Z" fill="#444"/></svg>
<span class="t" style="left:111px;top:198px;font-size:8.4px;color:#fff;font-weight:bold;transform:scaleX(0.9669);">Nom de l'entreprise</span>
<div class="b" style="left:193.4px;top:204.3px;width:10.2px;height:11px;background:#fff;border:1px solid #ecc8b8;"></div>
<svg class="b" style="left:195.2px;top:207.5px;" width="6" height="4" viewBox="0 0 6 4"><path d="M0.75 1.28H5.25L3 3.44Z" fill="#444"/></svg>
<span class="t" style="left:205px;top:198px;font-size:8.4px;color:#fff;font-weight:bold;transform:scaleX(0.9200);">Adresse</span>
<div class="b" style="left:298.9px;top:204.3px;width:10.2px;height:11px;background:#fff;border:1px solid #ecc8b8;"></div>
<svg class="b" style="left:298.5px;top:204px;" width="10" height="10" viewBox="0 0 10 10"><path d="M3 7.5H5.5" stroke="#555" stroke-width="1"/><path d="M7 3V8M5.8 6.8L7 8.2L8.2 6.8" stroke="#555" stroke-width="0.9" fill="none"/></svg>
<span class="t" style="left:311px;top:198px;font-size:8.4px;color:#fff;font-weight:bold;transform:scaleX(0.9661);">Code postal, Ville</span>
<div class="b" style="left:413.9px;top:204.3px;width:10.2px;height:11px;background:#fff;border:1px solid #ecc8b8;"></div>
<svg class="b" style="left:415.7px;top:207.5px;" width="6" height="4" viewBox="0 0 6 4"><path d="M0.75 1.28H5.25L3 3.44Z" fill="#444"/></svg>
<span class="t" style="left:426px;top:198px;font-size:8.4px;color:#fff;font-weight:bold;transform:scaleX(0.9641);">Téléphone principal</span>
<div class="b" style="left:506.9px;top:204.3px;width:10.2px;height:11px;background:#fff;border:1px solid #ecc8b8;"></div>
<svg class="b" style="left:508.7px;top:207.5px;" width="6" height="4" viewBox="0 0 6 4"><path d="M0.75 1.28H5.25L3 3.44Z" fill="#444"/></svg>
<span class="t" style="left:518.5px;top:198px;font-size:8.4px;color:#fff;font-weight:bold;transform:scaleX(0.9583);">Téléphone secondaire</span>
<div class="b" style="left:608.9px;top:204.3px;width:10.2px;height:11px;background:#fff;border:1px solid #ecc8b8;"></div>
<svg class="b" style="left:610.7px;top:207.5px;" width="6" height="4" viewBox="0 0 6 4"><path d="M0.75 1.28H5.25L3 3.44Z" fill="#444"/></svg>
<span class="t" style="left:621px;top:198px;font-size:8.4px;color:#fff;font-weight:bold;transform:scaleX(0.9536);">Adresse de messagerie</span>
<div class="b" style="left:770.9px;top:204.3px;width:10.2px;height:11px;background:#fff;border:1px solid #ecc8b8;"></div>
<svg class="b" style="left:772.7px;top:207.5px;" width="6" height="4" viewBox="0 0 6 4"><path d="M0.75 1.28H5.25L3 3.44Z" fill="#444"/></svg>
<div class="b" style="left:204px;top:237px;width:104.8px;height:171px;background:#c9c9c9;"></div>
<span class="t" style="left:35px;top:219px;font-size:8.4px;color:#444;font-weight:bold;transform:scaleX(0.9481);-webkit-text-stroke:0;">Jeff Smith</span>
<span class="t" style="left:111px;top:219px;font-size:8.4px;color:#6a6a6a;transform:scaleX(0.9347);-webkit-text-stroke:0;">ProseWare, Inc.</span>
<span class="t" style="left:311px;top:219px;font-size:8.4px;color:#6a6a6a;transform:scaleX(0.8986);-webkit-text-stroke:0;">Bukavu, Sud-Kivu</span>
<span class="t" style="left:426px;top:219px;font-size:8.4px;color:#6a6a6a;transform:scaleX(0.9023);-webkit-text-stroke:0;">(+243) 970-899-15</span>
<span class="t" style="left:518.5px;top:219px;font-size:8.4px;color:#6a6a6a;transform:scaleX(0.9095);-webkit-text-stroke:0;">(+243) 970-899-16</span>
<span class="t" style="left:621px;top:219px;font-size:8.4px;color:#6a6a6a;transform:scaleX(0.9091);-webkit-text-stroke:0;">jeff@proseware.com</span>
<span class="t" style="left:35px;top:241px;font-size:8.4px;color:#444;font-weight:bold;transform:scaleX(0.9481);-webkit-text-stroke:0;">Jeff Smith</span>
<span class="t" style="left:111px;top:241px;font-size:8.4px;color:#6a6a6a;transform:scaleX(0.9347);-webkit-text-stroke:0;">ProseWare, Inc.</span>
<span class="t" style="left:205px;top:241px;font-size:8.4px;color:#555;transform:scaleX(0.9101);-webkit-text-stroke:0;">Bukavu</span>
<span class="t" style="left:311px;top:241px;font-size:8.4px;color:#6a6a6a;transform:scaleX(0.8986);-webkit-text-stroke:0;">Bukavu, Sud-Kivu</span>
<span class="t" style="left:426px;top:241px;font-size:8.4px;color:#6a6a6a;transform:scaleX(0.9023);-webkit-text-stroke:0;">(+243) 970-899-15</span>
<span class="t" style="left:518.5px;top:241px;font-size:8.4px;color:#6a6a6a;transform:scaleX(0.9095);-webkit-text-stroke:0;">(+243) 970-899-16</span>
<span class="t" style="left:621px;top:241px;font-size:8.4px;color:#6a6a6a;transform:scaleX(0.9091);-webkit-text-stroke:0;">jeff@proseware.com</span>
<div class="b" style="left:31px;top:236.72px;width:172px;height:0.9px;background:#efefef;"></div>
<div class="b" style="left:309.5px;top:236.72px;width:467px;height:0.9px;background:#efefef;"></div>
<div class="b" style="left:204px;top:236.72px;width:104.8px;height:0.9px;background:#d2d2d2;"></div>
<span class="t" style="left:35px;top:263px;font-size:8.4px;color:#444;font-weight:bold;transform:scaleX(0.9481);-webkit-text-stroke:0;">Jeff Smith</span>
<span class="t" style="left:111px;top:263px;font-size:8.4px;color:#6a6a6a;transform:scaleX(0.9347);-webkit-text-stroke:0;">ProseWare, Inc.</span>
<span class="t" style="left:205px;top:263px;font-size:8.4px;color:#555;transform:scaleX(0.9101);-webkit-text-stroke:0;">Bukavu</span>
<span class="t" style="left:311px;top:263px;font-size:8.4px;color:#6a6a6a;transform:scaleX(0.8986);-webkit-text-stroke:0;">Bukavu, Sud-Kivu</span>
<span class="t" style="left:426px;top:263px;font-size:8.4px;color:#6a6a6a;transform:scaleX(0.9023);-webkit-text-stroke:0;">(+243) 970-899-15</span>
<span class="t" style="left:518.5px;top:263px;font-size:8.4px;color:#6a6a6a;transform:scaleX(0.9095);-webkit-text-stroke:0;">(+243) 970-899-16</span>
<span class="t" style="left:621px;top:263px;font-size:8.4px;color:#6a6a6a;transform:scaleX(0.9091);-webkit-text-stroke:0;">jeff@proseware.com</span>
<div class="b" style="left:31px;top:258.34000000000003px;width:172px;height:0.9px;background:#efefef;"></div>
<div class="b" style="left:309.5px;top:258.34000000000003px;width:467px;height:0.9px;background:#efefef;"></div>
<div class="b" style="left:204px;top:258.34000000000003px;width:104.8px;height:0.9px;background:#d2d2d2;"></div>
<span class="t" style="left:35px;top:284px;font-size:8.4px;color:#444;font-weight:bold;transform:scaleX(0.9481);-webkit-text-stroke:0;">Jeff Smith</span>
<span class="t" style="left:111px;top:284px;font-size:8.4px;color:#6a6a6a;transform:scaleX(0.9347);-webkit-text-stroke:0;">ProseWare, Inc.</span>
<span class="t" style="left:205px;top:284px;font-size:8.4px;color:#555;transform:scaleX(0.9101);-webkit-text-stroke:0;">Bukavu</span>
<span class="t" style="left:311px;top:284px;font-size:8.4px;color:#6a6a6a;transform:scaleX(0.8986);-webkit-text-stroke:0;">Bukavu, Sud-Kivu</span>
<span class="t" style="left:426px;top:284px;font-size:8.4px;color:#6a6a6a;transform:scaleX(0.9023);-webkit-text-stroke:0;">(+243) 970-899-15</span>
<span class="t" style="left:518.5px;top:284px;font-size:8.4px;color:#6a6a6a;transform:scaleX(0.9095);-webkit-text-stroke:0;">(+243) 970-899-16</span>
<span class="t" style="left:621px;top:284px;font-size:8.4px;color:#6a6a6a;transform:scaleX(0.9091);-webkit-text-stroke:0;">jeff@proseware.com</span>
<div class="b" style="left:31px;top:279.96000000000004px;width:172px;height:0.9px;background:#efefef;"></div>
<div class="b" style="left:309.5px;top:279.96000000000004px;width:467px;height:0.9px;background:#efefef;"></div>
<div class="b" style="left:204px;top:279.96000000000004px;width:104.8px;height:0.9px;background:#d2d2d2;"></div>
<span class="t" style="left:35px;top:306px;font-size:8.4px;color:#444;font-weight:bold;transform:scaleX(0.9481);-webkit-text-stroke:0;">Jeff Smith</span>
<span class="t" style="left:111px;top:306px;font-size:8.4px;color:#6a6a6a;transform:scaleX(0.9347);-webkit-text-stroke:0;">ProseWare, Inc.</span>
<span class="t" style="left:205px;top:306px;font-size:8.4px;color:#555;transform:scaleX(0.9101);-webkit-text-stroke:0;">Bukavu</span>
<span class="t" style="left:311px;top:306px;font-size:8.4px;color:#6a6a6a;transform:scaleX(0.8986);-webkit-text-stroke:0;">Bukavu, Sud-Kivu</span>
<span class="t" style="left:426px;top:306px;font-size:8.4px;color:#6a6a6a;transform:scaleX(0.9023);-webkit-text-stroke:0;">(+243) 970-899-15</span>
<span class="t" style="left:518.5px;top:306px;font-size:8.4px;color:#6a6a6a;transform:scaleX(0.9095);-webkit-text-stroke:0;">(+243) 970-899-16</span>
<span class="t" style="left:621px;top:306px;font-size:8.4px;color:#6a6a6a;transform:scaleX(0.9091);-webkit-text-stroke:0;">jeff@proseware.com</span>
<div class="b" style="left:31px;top:301.58000000000004px;width:172px;height:0.9px;background:#efefef;"></div>
<div class="b" style="left:309.5px;top:301.58000000000004px;width:467px;height:0.9px;background:#efefef;"></div>
<div class="b" style="left:204px;top:301.58000000000004px;width:104.8px;height:0.9px;background:#d2d2d2;"></div>
<span class="t" style="left:35px;top:327px;font-size:8.4px;color:#444;font-weight:bold;transform:scaleX(0.9481);-webkit-text-stroke:0;">Jeff Smith</span>
<span class="t" style="left:111px;top:327px;font-size:8.4px;color:#6a6a6a;transform:scaleX(0.9347);-webkit-text-stroke:0;">ProseWare, Inc.</span>
<span class="t" style="left:205px;top:327px;font-size:8.4px;color:#555;transform:scaleX(0.9101);-webkit-text-stroke:0;">Bukavu</span>
<span class="t" style="left:311px;top:327px;font-size:8.4px;color:#6a6a6a;transform:scaleX(0.8986);-webkit-text-stroke:0;">Bukavu, Sud-Kivu</span>
<span class="t" style="left:426px;top:327px;font-size:8.4px;color:#6a6a6a;transform:scaleX(0.9023);-webkit-text-stroke:0;">(+243) 970-899-15</span>
<span class="t" style="left:518.5px;top:327px;font-size:8.4px;color:#6a6a6a;transform:scaleX(0.9095);-webkit-text-stroke:0;">(+243) 970-899-16</span>
<span class="t" style="left:621px;top:327px;font-size:8.4px;color:#6a6a6a;transform:scaleX(0.9091);-webkit-text-stroke:0;">jeff@proseware.com</span>
<div class="b" style="left:31px;top:323.20000000000005px;width:172px;height:0.9px;background:#efefef;"></div>
<div class="b" style="left:309.5px;top:323.20000000000005px;width:467px;height:0.9px;background:#efefef;"></div>
<div class="b" style="left:204px;top:323.20000000000005px;width:104.8px;height:0.9px;background:#d2d2d2;"></div>
<span class="t" style="left:35px;top:349px;font-size:8.4px;color:#444;font-weight:bold;transform:scaleX(0.9481);-webkit-text-stroke:0;">Jeff Smith</span>
<span class="t" style="left:111px;top:349px;font-size:8.4px;color:#6a6a6a;transform:scaleX(0.9347);-webkit-text-stroke:0;">ProseWare, Inc.</span>
<span class="t" style="left:205px;top:349px;font-size:8.4px;color:#555;transform:scaleX(0.9101);-webkit-text-stroke:0;">Bukavu</span>
<span class="t" style="left:311px;top:349px;font-size:8.4px;color:#6a6a6a;transform:scaleX(0.8986);-webkit-text-stroke:0;">Bukavu, Sud-Kivu</span>
<span class="t" style="left:426px;top:349px;font-size:8.4px;color:#6a6a6a;transform:scaleX(0.9023);-webkit-text-stroke:0;">(+243) 970-899-15</span>
<span class="t" style="left:518.5px;top:349px;font-size:8.4px;color:#6a6a6a;transform:scaleX(0.9095);-webkit-text-stroke:0;">(+243) 970-899-16</span>
<span class="t" style="left:621px;top:349px;font-size:8.4px;color:#6a6a6a;transform:scaleX(0.9091);-webkit-text-stroke:0;">jeff@proseware.com</span>
<div class="b" style="left:31px;top:344.82000000000005px;width:172px;height:0.9px;background:#efefef;"></div>
<div class="b" style="left:309.5px;top:344.82000000000005px;width:467px;height:0.9px;background:#efefef;"></div>
<div class="b" style="left:204px;top:344.82000000000005px;width:104.8px;height:0.9px;background:#d2d2d2;"></div>
<span class="t" style="left:35px;top:371px;font-size:8.4px;color:#444;font-weight:bold;transform:scaleX(0.9481);-webkit-text-stroke:0;">Jeff Smith</span>
<span class="t" style="left:111px;top:371px;font-size:8.4px;color:#6a6a6a;transform:scaleX(0.9347);-webkit-text-stroke:0;">ProseWare, Inc.</span>
<span class="t" style="left:205px;top:371px;font-size:8.4px;color:#555;transform:scaleX(0.9101);-webkit-text-stroke:0;">Bukavu</span>
<span class="t" style="left:311px;top:371px;font-size:8.4px;color:#6a6a6a;transform:scaleX(0.8986);-webkit-text-stroke:0;">Bukavu, Sud-Kivu</span>
<span class="t" style="left:426px;top:371px;font-size:8.4px;color:#6a6a6a;transform:scaleX(0.9023);-webkit-text-stroke:0;">(+243) 970-899-15</span>
<span class="t" style="left:518.5px;top:371px;font-size:8.4px;color:#6a6a6a;transform:scaleX(0.9095);-webkit-text-stroke:0;">(+243) 970-899-16</span>
<span class="t" style="left:621px;top:371px;font-size:8.4px;color:#6a6a6a;transform:scaleX(0.9091);-webkit-text-stroke:0;">jeff@proseware.com</span>
<div class="b" style="left:31px;top:366.44000000000005px;width:172px;height:0.9px;background:#efefef;"></div>
<div class="b" style="left:309.5px;top:366.44000000000005px;width:467px;height:0.9px;background:#efefef;"></div>
<div class="b" style="left:204px;top:366.44000000000005px;width:104.8px;height:0.9px;background:#d2d2d2;"></div>
<span class="t" style="left:35px;top:392px;font-size:8.4px;color:#444;font-weight:bold;transform:scaleX(0.9466);-webkit-text-stroke:0;">Radim Petratur</span>
<span class="t" style="left:111px;top:392px;font-size:8.4px;color:#6a6a6a;transform:scaleX(0.9274);-webkit-text-stroke:0;">Litware, Inc.</span>
<span class="t" style="left:205px;top:392px;font-size:8.4px;color:#555;transform:scaleX(0.9101);-webkit-text-stroke:0;">Bukavu</span>
<span class="t" style="left:311px;top:392px;font-size:8.4px;color:#6a6a6a;transform:scaleX(0.8986);-webkit-text-stroke:0;">Bukavu, Sud-Kivu</span>
<span class="t" style="left:426px;top:392px;font-size:8.4px;color:#6a6a6a;transform:scaleX(0.9105);-webkit-text-stroke:0;">(+243) 970-899-11</span>
<span class="t" style="left:518.5px;top:392px;font-size:8.4px;color:#6a6a6a;transform:scaleX(0.9095);-webkit-text-stroke:0;">(+243) 970-899-12</span>
<span class="t" style="left:621px;top:392px;font-size:8.4px;color:#6a6a6a;transform:scaleX(0.9366);-webkit-text-stroke:0;">radim@litwareinc.com</span>
<div class="b" style="left:31px;top:388.06000000000006px;width:172px;height:0.9px;background:#efefef;"></div>
<div class="b" style="left:309.5px;top:388.06000000000006px;width:467px;height:0.9px;background:#efefef;"></div>
<div class="b" style="left:204px;top:388.06000000000006px;width:104.8px;height:0.9px;background:#d2d2d2;"></div>
<div class="b" style="left:26px;top:193.3px;width:1.6px;height:215px;background:#6e6e6e;"></div>
<div class="b" style="left:780.8px;top:215.3px;width:1px;height:193px;background:#6a6a6a;"></div>
<div class="b" style="left:204px;top:215.3px;width:104.8px;height:21.9px;background:#fff;"></div>
<span class="t" style="left:205px;top:219px;font-size:8.4px;color:#666;transform:scaleX(0.9101);">Bukavu</span>
<div class="b" style="left:203.2px;top:215px;width:1.1px;height:193px;background:#2a6044;"></div>
<div class="b" style="left:308.9px;top:214.5px;width:1.1px;height:193.5px;background:#2a6044;"></div>
<div class="b" style="left:807.3px;top:125px;width:12.7px;height:283px;background:#e6e6e6;"></div>
<div class="b" style="left:807.3px;top:136px;width:1px;height:272px;background:#c4c4c4;"></div>
<div class="b" style="left:809px;top:136px;width:8.8px;height:156px;background:#fff;border:1px solid #c8c8c8;border-top:none;"></div>
<div class="b" style="left:809px;top:292px;width:8.8px;height:105.5px;background:#bcbcbc;"></div>
<div class="b" style="left:809px;top:398px;width:8.8px;height:8.8px;background:#fff;border:1px solid #c8c8c8;"></div>
<svg class="b" style="left:810.4px;top:400.4px;" width="6" height="4" viewBox="0 0 6 4"><path d="M1.00 1.36H5.00L3 3.28Z" fill="#555"/></svg>
<div class="b" style="left:0px;top:407.8px;width:820px;height:15.8px;background:#e3e3e3;"></div>
<div class="b" style="left:0px;top:407.8px;width:820px;height:0.9px;background:#c6c6c6;"></div>
<svg class="b" style="left:14px;top:411px;" width="6" height="8" viewBox="0 0 6 8"><path d="M4.5 1V7L1 4Z" fill="#666"/></svg>
<svg class="b" style="left:31px;top:411px;" width="6" height="8" viewBox="0 0 6 8"><path d="M1.5 1V7L5 4Z" fill="#666"/></svg>
<span class="t" style="left:48.5px;top:408px;font-size:8px;color:#555;font-weight:bold;transform:scaleX(1.1244);">...</span>
<div class="b" style="left:60.8px;top:407.8px;width:85.8px;height:14.4px;background:#fdf3ee;border-bottom:2px solid #2a6a3c;background:linear-gradient(#ffffff 15%,#f4c6b2);"></div>
<span class="t" style="left:67.5px;top:408px;font-size:8.4px;color:#1f6a3c;font-weight:bold;transform:scaleX(0.9118);">Coordonnées client</span>
<div class="b" style="left:147.2px;top:408.7px;width:56.5px;height:13.8px;background:#ecf3f5;"></div>
<span class="t" style="left:154px;top:408px;font-size:8.4px;color:#333;transform:scaleX(0.9499);">Avant appel</span>
<div class="b" style="left:204.8px;top:408.7px;width:64.7px;height:13.8px;background:#9dd1d9;"></div>
<span class="t" style="left:213px;top:408px;font-size:8.4px;color:#1a3a40;transform:scaleX(0.9466);">Premier appel</span>
<div class="b" style="left:273px;top:408.7px;width:111.5px;height:13.8px;background:#4aa7b3;"></div>
<span class="t" style="left:280.5px;top:408px;font-size:8.4px;color:#12353a;transform:scaleX(0.9416);">Informations commerciales</span>
<div class="b" style="left:388px;top:408.7px;width:62.5px;height:13.8px;background:#1f5661;"></div>
<span class="t" style="left:395.5px;top:408px;font-size:8.4px;color:#fff;transform:scaleX(0.9622);clip-path:inset(0 4.5px 0 0);">Assurer un suivi</span>
<span class="t" style="left:455.5px;top:408px;font-size:8px;color:#555;font-weight:bold;transform:scaleX(1.1244);">...</span>
<svg class="b" style="left:469px;top:410px;" width="11" height="11" viewBox="0 0 11 11"><circle cx="5.5" cy="5.5" r="4.6" fill="#fff" stroke="#555" stroke-width="1"/><path d="M3 5.5H8M5.5 3V8" stroke="#444" stroke-width="1.1"/></svg>
<svg class="b" style="left:490px;top:411px;" width="3" height="9" viewBox="0 0 3 9"><circle cx="1.5" cy="1.2" r="0.7" fill="#777"/><circle cx="1.5" cy="4.4" r="0.7" fill="#777"/><circle cx="1.5" cy="7.6" r="0.7" fill="#777"/></svg>
<div class="b" style="left:502px;top:410px;width:8.5px;height:10.5px;background:#fff;border:1px solid #c8c8c8;"></div>
<svg class="b" style="left:503.5px;top:412.5px;" width="5" height="6" viewBox="0 0 5 6"><path d="M3.8 0.8V5.2L1.2 3Z" fill="#555"/></svg>
<div class="b" style="left:511px;top:410px;width:254px;height:10.5px;background:#fff;border:1px solid #d0d0d0;"></div>
<div class="b" style="left:765px;top:410px;width:33px;height:10.5px;background:#c6c6c6;"></div>
<div class="b" style="left:799px;top:410px;width:8.5px;height:10.5px;background:#fff;border:1px solid #c8c8c8;"></div>
<svg class="b" style="left:800.5px;top:412.5px;" width="5" height="6" viewBox="0 0 5 6"><path d="M1.2 0.8V5.2L3.8 3Z" fill="#555"/></svg>
<div class="b" style="left:0px;top:423.8px;width:820px;height:13px;background:#2c2c2c;"></div>
<div class="b" style="left:0px;top:436.8px;width:820px;height:2.2px;background:#e3ebef;"></div>
<div class="b" style="left:30px;top:436.8px;width:170px;height:2.2px;background:#4a4a4a;"></div>
<span class="t" style="left:4.5px;top:424px;font-size:6.8px;color:#fff;transform:scaleX(0.8271);">PRÊT</span>
<span class="t" style="left:570.5px;top:424px;font-size:6.8px;color:#fff;transform:scaleX(0.9248);">NB (NON VIDES) : 12</span>
<div class="b" style="left:643px;top:424px;width:20px;height:13px;background:#111;"></div>
<svg class="b" style="left:648px;top:426px;" width="10" height="10" viewBox="0 0 10 10"><rect x="0.5" y="0.5" width="8.5" height="8.5" fill="none" stroke="#fff" stroke-width="1"/><path d="M3.4 0.5V9M6.2 0.5V9M0.5 3.4H9M0.5 6.2H9" stroke="#fff" stroke-width="0.8"/></svg>
<svg class="b" style="left:673px;top:426px;" width="10" height="10" viewBox="0 0 10 10"><rect x="0.5" y="0.5" width="8.5" height="8.5" fill="none" stroke="#bbb" stroke-width="1"/><rect x="2.5" y="2.5" width="4.5" height="6.5" fill="none" stroke="#bbb" stroke-width="0.9"/></svg>
<svg class="b" style="left:695px;top:426px;" width="10" height="10" viewBox="0 0 10 10"><rect x="0.5" y="0.5" width="8.5" height="8.5" fill="none" stroke="#fff" stroke-width="1"/><rect x="2" y="0.5" width="2.2" height="5" fill="#fff"/><rect x="5.3" y="0.5" width="2.2" height="5" fill="#fff"/></svg>
<div class="b" style="left:714.5px;top:430.5px;width:3.5px;height:1px;background:#fff;"></div>
<div class="b" style="left:720px;top:430.6px;width:64px;height:0.9px;background:#eee;"></div>
<div class="b" style="left:746.5px;top:426.5px;width:2.2px;height:8.5px;background:#fff;"></div>
<div class="b" style="left:783px;top:430.5px;width:5px;height:1px;background:#fff;"></div>
<div class="b" style="left:785px;top:428.5px;width:1px;height:5px;background:#fff;"></div>
<span class="t" style="left:797.5px;top:424px;font-size:6.8px;color:#fff;transform:scaleX(0.8711);">90 %</span>
<div class="b" style="left:723.3px;top:73.3px;width:89px;height:90.2px;background:#fff;border:1px solid #c6c6c6;box-shadow:1px 1px 2px rgba(0,0,0,.25);"></div>
<div class="b" style="left:724.3px;top:75px;width:87px;height:13.6px;background:#c4e7d4;"></div>
<span class="t" style="left:744px;top:75px;font-size:7.7px;color:#4a4a4a;transform:scaleX(0.8817);">Trier de <u>A</u> à Z</span>
<span class="t" style="left:744px;top:90px;font-size:7.7px;color:#4a4a4a;transform:scaleX(0.8736);">Trier de <u>Z</u> à A</span>
<span class="t" style="left:744px;top:105px;font-size:7.7px;color:#4a4a4a;transform:scaleX(0.8783);"><u>T</u>ri personnalisé...</span>
<span class="t" style="left:744px;top:120px;font-size:7.7px;color:#4a4a4a;transform:scaleX(0.8895);"><u>F</u>iltrer</span>
<span class="t" style="left:744px;top:134px;font-size:7.7px;color:#4a4a4a;transform:scaleX(0.8452);">Effa<u>c</u>er</span>
<span class="t" style="left:744px;top:149px;font-size:7.7px;color:#4a4a4a;transform:scaleX(0.9030);"><u>R</u>éappliquer</span>
<svg class="b" style="left:727.8px;top:76.3px;" width="9" height="10" viewBox="0 0 9 10"><text x="0" y="4.3" font-size="5" font-weight="bold" font-family="Liberation Sans, sans-serif" fill="#3a6aa8">A</text><text x="0" y="9.3" font-size="5" font-weight="bold" font-family="Liberation Sans, sans-serif" fill="#4a5a78">Z</text><path d="M6.3 0.5V8.6M4.8 6.9L6.3 8.9L7.8 6.9" stroke="#555" stroke-width="0.9" fill="none"/></svg>
<svg class="b" style="left:727.8px;top:91px;" width="9" height="10" viewBox="0 0 9 10"><text x="0" y="4.3" font-size="5" font-weight="bold" font-family="Liberation Sans, sans-serif" fill="#3a6aa8">Z</text><text x="0" y="9.3" font-size="5" font-weight="bold" font-family="Liberation Sans, sans-serif" fill="#4a5a78">A</text><path d="M6.3 0.5V8.6M4.8 6.9L6.3 8.9L7.8 6.9" stroke="#555" stroke-width="0.9" fill="none"/></svg>
<svg class="b" style="left:727px;top:106px;" width="10" height="10" viewBox="0 0 10 10"><rect x="0.5" y="0.5" width="8.8" height="8.8" fill="#fff" stroke="#5a7aa8" stroke-width="1"/><rect x="0.5" y="0.5" width="8.8" height="1.8" fill="#5a7aa8"/><path d="M3.6 4V7.8M2.5 6.7L3.6 8L4.7 6.7M6.3 8V4M5.2 5.3L6.3 4L7.4 5.3" stroke="#444" stroke-width="0.8" fill="none"/></svg>
<div class="b" style="left:726px;top:120.2px;width:11.6px;height:11.6px;background:#f4faf6;border:1px solid #a8d8be;"></div>
<svg class="b" style="left:728px;top:122px;" width="8" height="9" viewBox="0 0 8 9"><path d="M0.3 0.5H7.7L4.9 3.8V8L3.1 6.9V3.8Z" fill="#666"/></svg>
<svg class="b" style="left:727px;top:136px;" width="10" height="10" viewBox="0 0 10 10"><path d="M0.3 0.5H8.3L5.2 4V7.8L3.4 6.7V4Z" fill="#666"/><path d="M5.8 6.2L8.8 9.2M8.8 6.2L5.8 9.2" stroke="#d04030" stroke-width="1.2"/></svg>
<svg class="b" style="left:727.3px;top:151px;" width="10" height="10" viewBox="0 0 10 10"><path d="M0.3 0.5H7.3L4.7 3.6V7.3L3 6.3V3.6Z" fill="#666"/><path d="M6 9A1.8 1.8 0 1 1 8.8 7.2" stroke="#3a9a70" stroke-width="1" fill="none"/><path d="M7.8 6.6L9.5 7.4L8.3 8.7Z" fill="#3a9a70"/></svg>
<svg class="b" style="left:806px;top:160px;" width="5" height="3" viewBox="0 0 5 3"><circle cx="1" cy="1.5" r="0.5" fill="#999"/><circle cx="2.7" cy="1.5" r="0.5" fill="#999"/><circle cx="4.4" cy="1.5" r="0.5" fill="#999"/></svg>
<div class="b" style="left:743px;top:118.4px;width:68px;height:0.8px;background:#e4e4e4;"></div>
<svg class="b" style="left:0;top:0" width="820" height="439" viewBox="0 0 820 439"><rect x="709.9" y="26.2" width="105" height="141.4" fill="none" stroke="#d4202c" stroke-width="4.2"/><path d="M639.5 92.3L672 91.2L672 84L700 101L672 120L672 111.2L639.5 111.2Z" fill="#fff" stroke="#d4202c" stroke-width="3.6" stroke-linejoin="miter"/><path d="M177.3 409V188A13.4 13.4 0 0 1 190.7 174.6H335.2A13.4 13.4 0 0 1 348.6 188V409.9A12.5 12.5 0 0 1 336.1 422.4H189.8A12.5 12.5 0 0 1 177.3 409.9Z" fill="none" stroke="#c9202e" stroke-width="3.8"/></svg>
</div></body></html>
